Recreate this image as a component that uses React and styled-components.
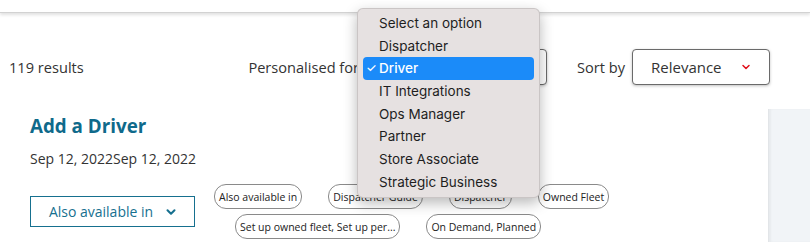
import React from 'react'
import styled, { createGlobalStyle } from 'styled-components'
import { ChevronDown } from 'lucide-react'

const GlobalStyle = createGlobalStyle`
  body {
    margin: 0;
    font-family: "Open Sans", "Noto Sans", sans-serif;
    color: #333;
    background: #fff;
  }
`

const Page = styled.div`
  width: 810px;
  height: 242px;
  overflow: hidden;
`

const Header = styled.header`
  height: 12px;
  background: #fff;
  border-bottom: 1px solid #d2d2d2;
  box-shadow: 0 2px 3px rgba(0, 0, 0, 0.12);
`

const Toolbar = styled.div`
  display: flex;
  align-items: center;
  justify-content: space-between;
  height: 36px;
  margin-top: 36px;
  padding: 0 40px 0 9px;
  font-size: 14.6px;
  color: #333;
`

const Controls = styled.div`
  display: flex;
  align-items: center;
`

const Label = styled.span`
  margin-right: ${p => p.gap || 6}px;
`

const SelectBox = styled.div`
  position: relative;
  box-sizing: border-box;
  width: ${p => p.width}px;
  height: 36px;
  display: flex;
  align-items: center;
  justify-content: space-between;
  padding: 0 17px 0 18px;
  border: 1px solid #6a6a6a;
  border-radius: 4px;
  box-shadow: 0 1px 3px rgba(0, 0, 0, 0.25);
  margin-right: ${p => p.after || 0}px;
  font-size: 15px;
  color: #333;
  background: #fff;
`

const Menu = styled.ul`
  position: absolute;
  top: -42px;
  left: -9px;
  z-index: 10;
  box-sizing: border-box;
  width: 183px;
  margin: 0;
  padding: 3px 5px 3px;
  list-style: none;
  background: #e6e1e1;
  border: 1px solid rgba(0, 0, 0, 0.12);
  border-radius: 6px;
  box-shadow: 0 5px 14px rgba(0, 0, 0, 0.28);
  font-family: Inter, "Liberation Sans", sans-serif;
  font-size: 13.5px;
  color: #1e1e1e;
`

const MenuItem = styled.li`
  position: relative;
  height: 22.7px;
  line-height: 22.7px;
  padding-left: 16px;
  border-radius: 4px;
  background: ${p => (p.active ? '#1b8bf9' : 'transparent')};
  color: ${p => (p.active ? '#fff' : 'inherit')};
  font-weight: ${p => (p.active ? 500 : 400)};
`

const Check = styled.span`
  position: absolute;
  left: 3px;
  top: 0;
  font-size: 12px;
`

const Body = styled.div`
  display: flex;
  margin-top: 24px;
  height: 133px;
`

const Card = styled.div`
  flex: 1;
  padding: 4px 0 0 30px;
`

const Title = styled.h2`
  margin: 0;
  font-size: 18.8px;
  line-height: 27px;
  font-weight: 700;
  color: #0f6a8b;
`

const Dates = styled.div`
  margin-top: 9px;
  font-size: 14px;
  color: #333;
`

const Actions = styled.div`
  display: flex;
  align-items: center;
  margin-top: 16px;
`

const AvailableButton = styled.button`
  box-sizing: border-box;
  width: 165px;
  height: 31px;
  display: flex;
  align-items: center;
  justify-content: center;
  gap: 11px;
  padding: 0 0 0 2px;
  background: #fff;
  border: 1px solid #16708f;
  color: #16708f;
  font-family: "Open Sans", sans-serif;
  font-size: 14px;
`

const Pills = styled.div`
  display: flex;
  flex-direction: column;
  gap: 5px;
  margin-left: 19px;
`

const PillRow = styled.div`
  display: flex;
  gap: 26px;
  padding-left: ${p => p.indent || 0}px;
`

const Pill = styled.span`
  box-sizing: border-box;
  height: 25px;
  display: inline-flex;
  align-items: center;
  padding: 0 4px;
  border: 1px solid #8a8a8a;
  border-radius: 12px;
  font-size: 10.5px;
  color: #222;
  white-space: nowrap;
`

const Aside = styled.aside`
  width: 41px;
  background: #f1f4f7;
  border-left: 1px solid #e2e5e8;
  box-shadow: inset 2px 0 2px rgba(0, 0, 0, 0.04);
`

const roles = [
  'Select an option',
  'Dispatcher',
  'Driver',
  'IT Integrations',
  'Ops Manager',
  'Partner',
  'Store Associate',
  'Strategic Business'
]

const App = () => {
  return (
    <Page>
      <GlobalStyle />
      <Header />
      <Toolbar>
        <span>119 results</span>
        <Controls>
          <Label>Personalised for</Label>
          <SelectBox width={182} after={30}>
            <Menu>
              {roles.map(r => (
                <MenuItem key={r} active={r === 'Driver'}>
                  {r === 'Driver' && <Check>✓</Check>}
                  {r}
                </MenuItem>
              ))}
            </Menu>
          </SelectBox>
          <Label gap={7}>Sort by</Label>
          <SelectBox width={138}>
            <span>Relevance</span>
            <ChevronDown size={12} strokeWidth={3} color="#e0101b" />
          </SelectBox>
        </Controls>
      </Toolbar>
      <Body>
        <Card>
          <Title>Add a Driver</Title>
          <Dates>Sep 12, 2022Sep 12, 2022</Dates>
          <Actions>
            <AvailableButton>
              Also available in
              <ChevronDown size={14} strokeWidth={3.5} />
            </AvailableButton>
            <Pills>
              <PillRow>
                <Pill>Also available in</Pill>
                <Pill>Dispatcher Guide</Pill>
                <Pill>Dispatcher</Pill>
                <Pill>Owned Fleet</Pill>
              </PillRow>
              <PillRow indent={21}>
                <Pill>Set up owned fleet, Set up per...</Pill>
                <Pill>On Demand, Planned</Pill>
              </PillRow>
            </Pills>
          </Actions>
        </Card>
        <Aside />
      </Body>
    </Page>
  )
}

export default App
